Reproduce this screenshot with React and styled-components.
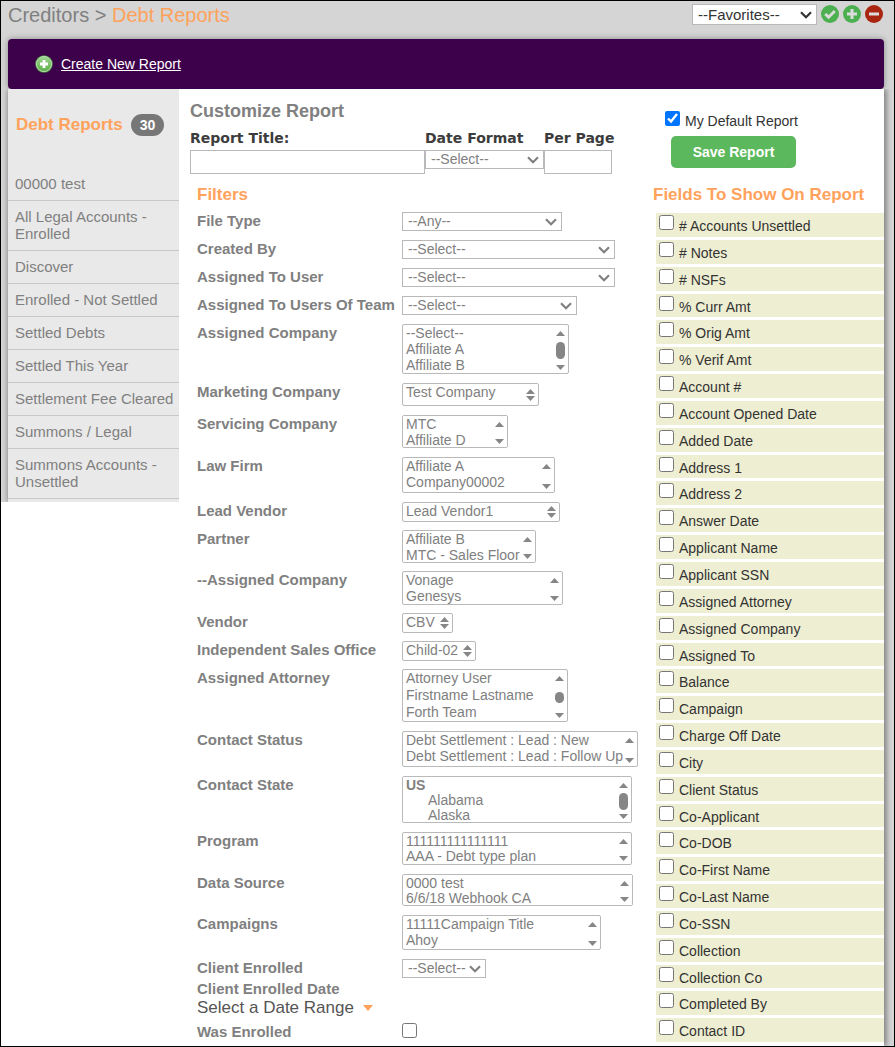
import React from "react";
import styled, { createGlobalStyle } from "styled-components";

const savedReports = [
  "00000 test",
  "All Legal Accounts - Enrolled",
  "Discover",
  "Enrolled - Not Settled",
  "Settled Debts",
  "Settled This Year",
  "Settlement Fee Cleared",
  "Summons / Legal",
  "Summons Accounts - Unsettled",
];

const ownerFilters = [
  { label: "File Type", text: "--Any--", width: 160 },
  { label: "Created By", text: "--Select--", width: 213 },
  { label: "Assigned To User", text: "--Select--", width: 213 },
  { label: "Assigned To Users Of Team", text: "--Select--", width: 175 },
  {
    label: "Assigned Company",
    options: ["--Select--", "Affiliate A", "Affiliate B"],
    width: 167,
    height: 50,
    thumb: 17,
  },
  { label: "Marketing Company", options: ["Test Company"], width: 137, height: 23, line: 20 },
  { label: "Servicing Company", options: ["MTC", "Affiliate D"], width: 106, height: 33 },
  { label: "Law Firm", options: ["Affiliate A", "Company00002"], width: 153, height: 36 },
];

const partnerFilters = [
  { label: "Lead Vendor", options: ["Lead Vendor1"], width: 158, height: 20 },
  { label: "Partner", options: ["Affiliate B", "MTC - Sales Floor"], width: 134, height: 33 },
  { label: "--Assigned Company", options: ["Vonage", "Genesys"], width: 161, height: 34 },
  { label: "Vendor", options: ["CBV"], width: 51, height: 20 },
  { label: "Independent Sales Office", options: ["Child-02"], width: 74, height: 20 },
  {
    label: "Assigned Attorney",
    options: ["Attorney User", "Firstname Lastname", "Forth Team"],
    width: 166,
    height: 53,
    line: 17,
    thumb: 11,
  },
];

const contactFilters = [
  {
    label: "Contact Status",
    options: ["Debt Settlement : Lead : New", "Debt Settlement : Lead : Follow Up"],
    width: 236,
    height: 36,
  },
  {
    label: "Contact State",
    group: "US",
    options: ["Alabama", "Alaska"],
    width: 230,
    height: 47,
    line: 15,
    thumb: 17,
  },
  { label: "Program", options: ["111111111111111", "AAA - Debt type plan"], width: 230, height: 33, line: 15 },
  { label: "Data Source", options: ["0000 test", "6/6/18 Webhook CA"], width: 231, height: 32, line: 15 },
  { label: "Campaigns", options: ["11111Campaign Title", "Ahoy"], width: 199, height: 35, line: 16 },
  { label: "Client Enrolled", text: "--Select--", width: 84 },
];

const reportFields = [
  "# Accounts Unsettled",
  "# Notes",
  "# NSFs",
  "% Curr Amt",
  "% Orig Amt",
  "% Verif Amt",
  "Account #",
  "Account Opened Date",
  "Added Date",
  "Address 1",
  "Address 2",
  "Answer Date",
  "Applicant Name",
  "Applicant SSN",
  "Assigned Attorney",
  "Assigned Company",
  "Assigned To",
  "Balance",
  "Campaign",
  "Charge Off Date",
  "City",
  "Client Status",
  "Co-Applicant",
  "Co-DOB",
  "Co-First Name",
  "Co-Last Name",
  "Co-SSN",
  "Collection",
  "Collection Co",
  "Completed By",
  "Contact ID",
];

const toId = (prefix, label) =>
  prefix + "-" + label.toLowerCase().replace(/[^a-z0-9]+/g, "-");

const RoundIcon = ({ color, path }) => (
  <svg width="18" height="18" viewBox="0 0 18 18" aria-hidden="true">
    <circle cx="9" cy="9" r="9" fill={color} />
    <path d={path} fill="none" stroke="#dcdcdc" strokeWidth="3" />
  </svg>
);

const AddIcon = () => (
  <svg width="18" height="18" viewBox="0 0 18 18" aria-hidden="true">
    <defs>
      <linearGradient id="addFill" x1="0" y1="0" x2="0" y2="1">
        <stop offset="0" stopColor="#9fd391" />
        <stop offset="1" stopColor="#5cb04a" />
      </linearGradient>
    </defs>
    <circle cx="9" cy="9" r="8.8" fill="#4d8a41" />
    <circle cx="9" cy="9" r="7.6" fill="url(#addFill)" stroke="#b5dcab" strokeWidth="1" />
    <path d="M9 5v8M5 9h8" stroke="#fff" strokeWidth="2.8" />
  </svg>
);

const Chevron = () => (
  <svg width="12" height="8" viewBox="0 0 12 8" aria-hidden="true">
    <path d="M1 1.2 6 6.2 11 1.2" fill="none" stroke="currentColor" strokeWidth="2.2" />
  </svg>
);

const Triangle = ({ up }) => (
  <svg width="9" height="5" viewBox="0 0 9 5" aria-hidden="true">
    <path d={up ? "M0 5 4.5 0 9 5z" : "M0 0h9L4.5 5z"} fill="#868686" />
  </svg>
);

const DropDown = ({ id, text, width, dark, label }) => (
  <DropDownBox $width={width} $dark={dark}>
    <DropDownSelect id={id} aria-label={label} $dark={dark}>
      <option>{text}</option>
    </DropDownSelect>
    <Chevron />
  </DropDownBox>
);

const ListBox = ({ id, options, group, width, height, line = 16, thumb }) => {
  const items = options.map((option) => <option key={option}>{option}</option>);
  return (
    <ListBoxFrame $width={width}>
      <ListSelect id={id} multiple size={options.length} $height={height} $line={line}>
        {group ? <optgroup label={group}>{items}</optgroup> : items}
      </ListSelect>
      <ScrollArrows $compact={options.length === 1}>
        <Triangle up />
        {thumb && <Thumb $height={thumb} />}
        <Triangle />
      </ScrollArrows>
    </ListBoxFrame>
  );
};

const FilterRows = ({ filters, gap }) => (
  <FilterGroup $gap={gap}>
    {filters.map((filter) => {
      const id = toId("filter", filter.label);
      return (
        <FilterRow key={filter.label}>
          <FilterLabel htmlFor={id}>{filter.label}</FilterLabel>
          {filter.options ? (
            <ListBox id={id} {...filter} />
          ) : (
            <DropDown id={id} text={filter.text} width={filter.width} />
          )}
        </FilterRow>
      );
    })}
  </FilterGroup>
);

const App = () => {
  return (
    <Page>
      <GlobalStyle />
      <Header>
        <TopBar>
          <Breadcrumb>
            Creditors &gt; <span>Debt Reports</span>
          </Breadcrumb>
          <Favorites>
            <DropDown label="Favorites" text="--Favorites--" width={125} dark />
            <IconButton type="button" aria-label="Apply favorite">
              <RoundIcon color="#4caf50" path="M4.2 9 7.6 12.2 13.8 6" />
            </IconButton>
            <IconButton type="button" aria-label="Add favorite">
              <RoundIcon color="#4caf50" path="M9 4v10M4 9h10" />
            </IconButton>
            <IconButton type="button" aria-label="Remove favorite">
              <RoundIcon color="#a92510" path="M4 9h10" />
            </IconButton>
          </Favorites>
        </TopBar>
        <Toolbar>
          <AddIcon />
          <a href="#new">Create New Report</a>
        </Toolbar>
      </Header>
      <Body>
        <SideColumn>
          <SideGutter>
            <Sidebar>
              <SideTitle>
                Debt Reports <Badge>30</Badge>
              </SideTitle>
              {savedReports.map((report) => (
                <SideLink key={report} href="#report">
                  {report}
                </SideLink>
              ))}
            </Sidebar>
          </SideGutter>
        </SideColumn>
        <Main>
          <FilterColumn>
            <Heading>Customize Report</Heading>
            <ReportSettings>
              <Setting $width={235}>
                <label htmlFor="title">Report Title:</label>
                <TextBox id="title" type="text" />
              </Setting>
              <Setting $width={119}>
                <label htmlFor="format">Date Format</label>
                <DropDown id="format" text="--Select--" width={119} />
              </Setting>
              <Setting $width={68}>
                <label htmlFor="perPage">Per Page</label>
                <TextBox id="perPage" type="text" />
              </Setting>
            </ReportSettings>
            <Filters>
              <OrangeHeading>Filters</OrangeHeading>
              <FilterRows filters={ownerFilters} gap={9} />
              <FilterRows filters={partnerFilters} gap={8} />
              <FilterRows filters={contactFilters} gap={9} />
              <DateFilter>
                <FilterLabel as="div">Client Enrolled Date</FilterLabel>
                <DateRange type="button">
                  Select a Date Range
                  <svg width="10" height="6" viewBox="0 0 10 6" aria-hidden="true">
                    <path d="M0 0h10L5 6z" fill="#ffa25b" />
                  </svg>
                </DateRange>
              </DateFilter>
              <FilterRow>
                <FilterLabel htmlFor="wasEnrolled">Was Enrolled</FilterLabel>
                <CheckBox id="wasEnrolled" type="checkbox" />
              </FilterRow>
            </Filters>
          </FilterColumn>
          <FieldColumn>
            <DefaultReport>
              <CheckBox id="default" type="checkbox" defaultChecked />
              <label htmlFor="default">My Default Report</label>
            </DefaultReport>
            <SaveButton type="button">Save Report</SaveButton>
            <OrangeHeading>Fields To Show On Report</OrangeHeading>
            <FieldList>
              {reportFields.map((field, index) => {
                const id = "field-" + index;
                return (
                  <FieldRow key={field}>
                    <CheckBox id={id} type="checkbox" />
                    <label htmlFor={id}>{field}</label>
                  </FieldRow>
                );
              })}
            </FieldList>
          </FieldColumn>
        </Main>
      </Body>
    </Page>
  );
};

export default App;

const GlobalStyle = createGlobalStyle`
  * {
    box-sizing: border-box;
  }
  body {
    margin: 0;
    font-family: "Liberation Sans", Arial, sans-serif;
    font-size: 14px;
    color: #333;
  }
  button, input, select {
    font-family: inherit;
    margin: 0;
  }
  svg {
    display: block;
    flex: none;
  }
`;

const Page = styled.div`
  display: flex;
  flex-direction: column;
  min-height: 100vh;
  border: 1px solid #000;
  background-color: #d5d5d5;
  overflow: hidden;
`;

const Header = styled.header`
  padding: 0 10px 0 7px;
`;

const TopBar = styled.div`
  display: flex;
  justify-content: space-between;
  height: 38px;
  padding-right: 1px;
`;

const Breadcrumb = styled.h1`
  margin: 0;
  padding-top: 2px;
  font-size: 20px;
  line-height: 24px;
  font-weight: normal;
  color: #808080;
  span {
    color: #ffa25b;
  }
`;

const Favorites = styled.div`
  display: flex;
  align-items: flex-start;
  gap: 4px;
  padding-top: 3px;
`;

const IconButton = styled.button`
  width: 18px;
  height: 18px;
  padding: 0;
  border: none;
  background: none;
  margin-top: 1px;
`;

const Toolbar = styled.nav`
  display: flex;
  align-items: center;
  gap: 8px;
  height: 50px;
  padding-left: 27px;
  border-radius: 4px;
  background-color: #3d004b;
  box-shadow: 0 0 6px #888;
  a {
    color: #fff;
  }
`;

const Body = styled.div`
  display: flex;
  flex: 1;
  padding-right: 10px;
`;

const SideColumn = styled.div`
  flex: none;
  width: 178px;
  background-color: #fff;
`;

const SideGutter = styled.div`
  padding-left: 7px;
  background-color: #d5d5d5;
  overflow: hidden;
`;

const Sidebar = styled.aside`
  padding-bottom: 3px;
  background-color: #e9e9e9;
  box-shadow: 0 0 6px #777;
`;

const SideTitle = styled.h2`
  display: flex;
  align-items: center;
  gap: 8px;
  height: 79px;
  margin: 0;
  padding: 0 0 7px 8px;
  font-size: 17px;
  color: #ffa25b;
  white-space: nowrap;
`;

const Badge = styled.span`
  padding: 0 9px;
  border-radius: 11px;
  background-color: #777;
  color: #fff;
  font-size: 14px;
  line-height: 22px;
`;

const SideLink = styled.a`
  display: block;
  padding: 7px 0 8px 7px;
  border-bottom: 1px solid #c8c8c8;
  color: #808080;
  font-size: 15px;
  line-height: 17px;
  text-decoration: none;
`;

const Main = styled.main`
  display: flex;
  flex: 1;
  min-width: 0;
  background-color: #fff;
  box-shadow: 3px 0 5px #888;
  clip-path: inset(0 -10px 0 0);
`;

const FilterColumn = styled.section`
  flex: 1;
  min-width: 0;
  padding: 12px 0 0 11px;
`;

const Heading = styled.h2`
  margin: 0 0 7px;
  font-size: 18px;
  line-height: 20px;
  color: #808080;
`;

const ReportSettings = styled.div`
  display: flex;
  align-items: flex-start;
  margin-bottom: 11px;
`;

const Setting = styled.div`
  display: flex;
  flex-direction: column;
  gap: 2px;
  width: ${(props) => props.$width}px;
  label {
    font-family: "DejaVu Sans", Verdana, sans-serif;
    font-weight: bold;
    font-size: 14px;
    line-height: 20px;
    white-space: nowrap;
    color: #3c3c3c;
  }
`;

const TextBox = styled.input`
  width: 100%;
  height: 24px;
  border: 1px solid #b9b9b9;
  background-color: #fff;
`;

const DropDownBox = styled.div`
  position: relative;
  width: ${(props) => props.$width}px;
  color: ${(props) => (props.$dark ? "#333" : "#808080")};
  svg {
    position: absolute;
    top: 50%;
    right: 5px;
    transform: translateY(-50%);
    pointer-events: none;
  }
`;

const DropDownSelect = styled.select`
  display: block;
  appearance: none;
  width: 100%;
  height: ${(props) => (props.$dark ? 21 : 19)}px;
  padding: ${(props) => (props.$dark ? "0 5px" : "0 5px 1px")};
  border: 1px solid #b9b9b9;
  border-radius: 0;
  background-color: #fff;
  color: inherit;
  font-size: ${(props) => (props.$dark ? 15 : 14)}px;
  line-height: 16px;
`;

const ListBoxFrame = styled.div`
  position: relative;
  width: ${(props) => props.$width}px;
`;

const ListSelect = styled.select`
  display: block;
  width: 100%;
  height: ${(props) => props.$height}px;
  padding: 0;
  border: 1px solid #b9b9b9;
  border-radius: 2px;
  background-color: #fff;
  color: #808080;
  font-size: 14px;
  scrollbar-width: none;
  option {
    height: ${(props) => props.$line}px;
    min-height: 0;
    padding: 0 0 0 3px;
    line-height: ${(props) => props.$line}px;
  }
  optgroup {
    padding: 0 0 0 1px;
    line-height: 14px;
  }
  optgroup option {
    padding-left: 24px;
  }
  optgroup option:first-of-type {
    margin-top: -3px;
  }
`;

const ScrollArrows = styled.div`
  position: absolute;
  top: 1px;
  right: 1px;
  bottom: 1px;
  width: 15px;
  display: flex;
  flex-direction: column;
  align-items: center;
  justify-content: ${(props) => (props.$compact ? "center" : "space-between")};
  gap: ${(props) => (props.$compact ? 2 : 0)}px;
  padding: ${(props) => (props.$compact ? "0" : "6px 0 3px")};
  pointer-events: none;
`;

const Thumb = styled.div`
  width: 9px;
  height: ${(props) => props.$height}px;
  border-radius: 5px;
  background-color: #868686;
`;

const Filters = styled.div`
  padding-left: 7px;
`;

const OrangeHeading = styled.h2`
  margin: 0 0 7px;
  font-size: 17px;
  line-height: 20px;
  color: #ffa25b;
`;

const FilterGroup = styled.div`
  display: flex;
  flex-direction: column;
  gap: ${(props) => props.$gap}px;
  & + & {
    margin-top: 9px;
  }
`;

const FilterRow = styled.div`
  display: grid;
  grid-template-columns: 205px auto;
  justify-content: start;
  align-items: start;
`;

const FilterLabel = styled.label`
  font-size: 15px;
  line-height: 18px;
  font-weight: bold;
  white-space: nowrap;
  color: #808080;
`;

const DateFilter = styled.div`
  padding: 2px 0 6px;
`;

const DateRange = styled.button`
  display: flex;
  align-items: center;
  gap: 9px;
  padding: 0;
  border: none;
  background: none;
  color: #555;
  font-size: 17px;
  line-height: 19px;
`;

const CheckBox = styled.input`
  flex: none;
  width: 15px;
  height: 15px;
`;

const FieldColumn = styled.section`
  flex: none;
  display: flex;
  flex-direction: column;
  align-items: flex-start;
  width: 231px;
  padding: 22px 0 4px;
`;

const DefaultReport = styled.div`
  display: flex;
  gap: 5px;
  padding-left: 12px;
  label {
    line-height: 20px;
  }
`;

const SaveButton = styled.button`
  width: 125px;
  height: 32px;
  margin: 5px 0 17px 18px;
  border: none;
  border-radius: 5px;
  background-color: #5cb85c;
  color: #fff;
  font-size: 14px;
  font-weight: bold;
`;

const FieldList = styled.div`
  flex: 1;
  align-self: stretch;
  display: flex;
  flex-direction: column;
  gap: 3px;
  margin: 1px 0 0 3px;
`;

const FieldRow = styled.div`
  flex: 1 0 auto;
  display: flex;
  gap: 5px;
  height: 23px;
  padding: 2px 3px 0;
  background-color: #eeeed2;
  label {
    line-height: 22px;
  }
`;
